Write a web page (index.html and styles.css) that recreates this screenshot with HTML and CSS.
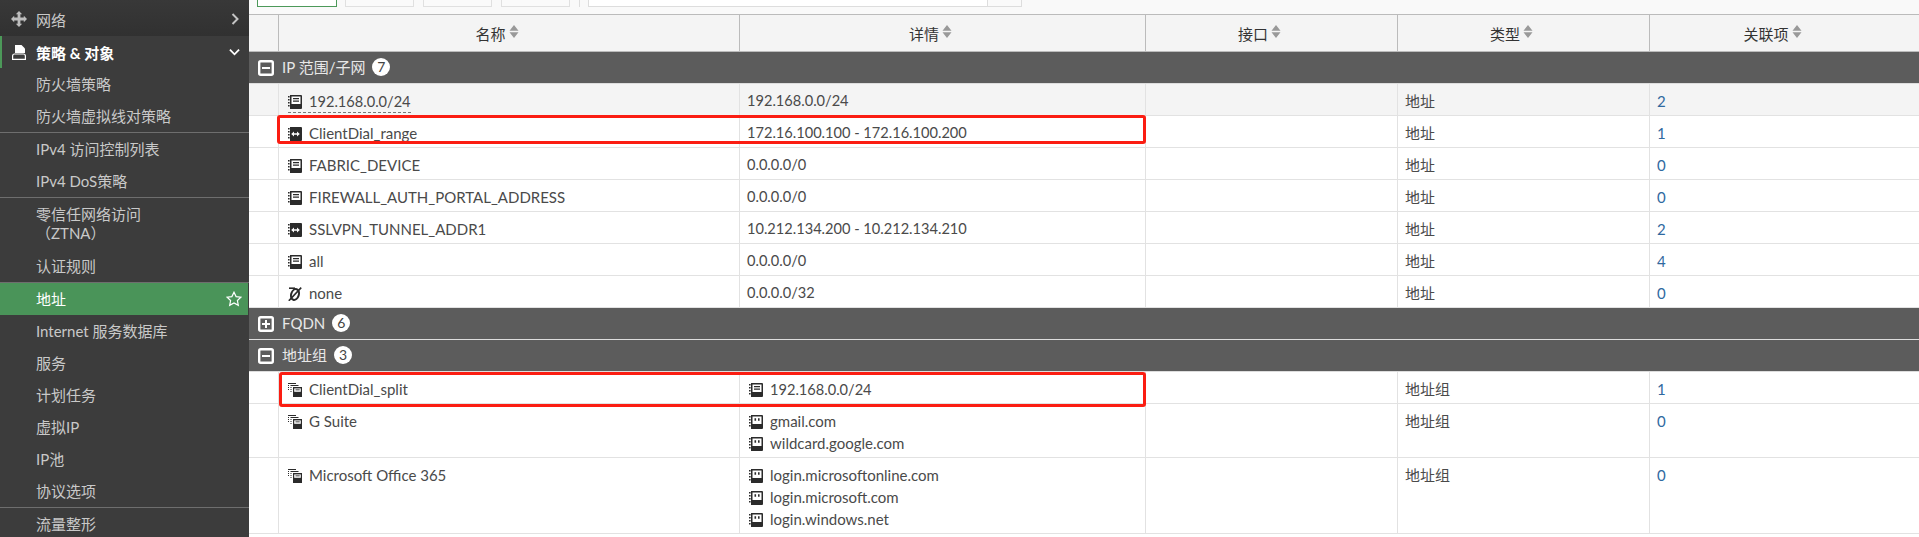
FILE: index.html
```html
<!DOCTYPE html>
<html lang="zh-CN">
<head>
<meta charset="utf-8">
<title>地址</title>
<link rel="stylesheet" href="styles.css">
</head>
<body>
<svg class="defs" width="0" height="0" aria-hidden="true">
  <symbol id="i-subnet" viewBox="0 0 14 14">
    <path fill="#2b2b2b" d="M2 0h11a1 1 0 0 1 1 1v12a1 1 0 0 1-1 1H2z"/>
    <path fill="#fff" d="M3.500 1.500h9v7.500h-9z"/>
    <path fill="#2b2b2b" d="M0 1h1.600v1.400H0zM0 4h1.600v1.400H0zM0 7h1.600v1.400H0zM0 10h1.600v1.400H0zM5 3h6v1.200H5zM5 5.600h6v1.200H5z"/>
  </symbol>
  <symbol id="i-range" viewBox="0 0 14 14">
    <path fill="#2b2b2b" d="M2 0h11a1 1 0 0 1 1 1v12a1 1 0 0 1-1 1H2z"/>
    <path fill="#2b2b2b" d="M0 1h1.600v1.400H0zM0 4h1.600v1.400H0zM0 7h1.600v1.400H0zM0 10h1.600v1.400H0z"/>
    <path fill="#fff" d="M3.200 7 6 4.600v1.600h3V4.600L11.800 7 9 9.400V7.800H6v1.600z"/>
  </symbol>
  <symbol id="i-fqdn" viewBox="0 0 14 14">
    <path fill="#2b2b2b" d="M2 0h11a1 1 0 0 1 1 1v12a1 1 0 0 1-1 1H2z"/>
    <path fill="#2b2b2b" d="M0 1h1.600v1.400H0zM0 4h1.600v1.400H0zM0 7h1.600v1.400H0zM0 10h1.600v1.400H0z"/>
    <path fill="#fff" d="M3.500 1.500h9v7.500h-9z"/>
    <path fill="#2b2b2b" d="M5.500 3.200h1.600v2.600H5.500zM9 3.200h1.600v2.600H9z"/>
  </symbol>
  <symbol id="i-group" viewBox="0 0 14 14">
    <path fill="#2b2b2b" d="M0 0h8v1H0zM0 2h1v1H0zM0 4h1v1H0zM0 6h1v1H0zM2.500 2h8v1h-8zM2.500 4h1v1h-1zM2.500 6h1v1h-1zM2.500 8h1v1h-1z"/>
    <path fill="#2b2b2b" d="M5 4h9v10H5z"/>
    <path fill="#fff" d="M6.200 5.400h6.600v3.400H6.200z"/>
    <path fill="#2b2b2b" d="M7.500 6.400h4.200v.9H7.500z"/>
  </symbol>
  <symbol id="i-none" viewBox="0 0 14 14">
    <ellipse cx="7" cy="7.500" rx="3.800" ry="5.500" transform="rotate(18 7 7.500)" fill="none" stroke="#2b2b2b" stroke-width="2"/>
    <path fill="none" stroke="#2b2b2b" stroke-width="1.600" d="M.8 13.800 13.200.6"/>
    <path fill="none" stroke="#2b2b2b" stroke-width="1.600" d="M1 1.200h6"/>
  </symbol>
  <symbol id="i-sort" viewBox="0 0 10 13">
    <path fill="#999" d="M5 0l4.500 5.700H.5zM.5 7.300h9L5 13z"/>
  </symbol>
  <symbol id="i-minus" viewBox="0 0 16 16">
    <rect x="1.200" y="1.200" width="13.600" height="13.600" rx="1.500" fill="none" stroke="#fff" stroke-width="2.400"/>
    <path fill="#fff" d="M4 7h8v2H4z"/>
  </symbol>
  <symbol id="i-plus" viewBox="0 0 16 16">
    <rect x="1.200" y="1.200" width="13.600" height="13.600" rx="1.500" fill="none" stroke="#fff" stroke-width="2.400"/>
    <path fill="#fff" d="M4 7h3V4h2v3h3v2H9v3H7V9H4z"/>
  </symbol>
</svg>

<div class="app">
  <nav class="sidebar">
    <div class="nav-top">
      <svg class="nav-move" viewBox="0 0 16 16"><path fill="#bdbdbd" d="M8 0l3.200 3.200H9.400v3.400h3.400V4.800L16 8l-3.200 3.200V9.400H9.400v3.400h1.800L8 16l-3.200-3.200h1.800V9.400H3.200v1.800L0 8l3.200-3.200v1.800h3.400V3.200H4.800z"/></svg>
      <span class="nav-label">网络</span>
      <svg class="nav-chev" viewBox="0 0 8 12"><path fill="none" stroke="#c4c4c4" stroke-width="2" d="M1.500 1l5 5-5 5"/></svg>
    </div>
    <div class="nav-section">
      <svg class="nav-doc" viewBox="0 0 14 15"><path fill="#fff" d="M3 0h6.500L13 3.500V8H3z"/><path fill="none" stroke="#fff" stroke-width="1.200" d="M.6 14.400V11c0-1.200.8-2 2-2h8.800c1.200 0 2 .8 2 2v3.400z"/></svg>
      <span class="nav-label">策略 &amp; 对象</span>
      <svg class="nav-chev-down" viewBox="0 0 12 8"><path fill="none" stroke="#fff" stroke-width="2" d="M1 1.500l5 5 5-5"/></svg>
    </div>
    <div class="nav-item">防火墙策略</div>
    <div class="nav-item nav-sep">防火墙虚拟线对策略</div>
    <div class="nav-item">IPv4 访问控制列表</div>
    <div class="nav-item nav-sep">IPv4 DoS策略</div>
    <div class="nav-item nav-two">零信任网络访问<br>（ZTNA）</div>
    <div class="nav-item nav-sep">认证规则</div>
    <div class="nav-item nav-active">地址
      <svg class="nav-star" viewBox="0 0 16 16"><path fill="none" stroke="#fff" stroke-width="1.200" d="M8 1.200l2.100 4.400 4.800.6-3.500 3.300.9 4.800L8 12l-4.300 2.300.9-4.800L1.100 6.200l4.800-.6z"/></svg>
    </div>
    <div class="nav-item">Internet 服务数据库</div>
    <div class="nav-item">服务</div>
    <div class="nav-item">计划任务</div>
    <div class="nav-item">虚拟IP</div>
    <div class="nav-item">IP池</div>
    <div class="nav-item nav-sep">协议选项</div>
    <div class="nav-item">流量整形</div>
  </nav>

  <main class="main">
    <div class="toolbar">
      <span class="tb-btn tb-primary"></span>
      <span class="tb-btn"></span>
      <span class="tb-btn"></span>
      <span class="tb-btn"></span>
      <span class="tb-sep"></span>
      <span class="tb-search"></span>
      <span class="tb-go"></span>
    </div>
    <table class="grid">
      <colgroup>
        <col class="c-check"><col class="c-name"><col class="c-detail"><col class="c-iface"><col class="c-type"><col class="c-ref">
      </colgroup>
      <thead>
        <tr>
          <th></th>
          <th>名称<svg class="sort"><use href="#i-sort"/></svg></th>
          <th>详情<svg class="sort"><use href="#i-sort"/></svg></th>
          <th>接口<svg class="sort"><use href="#i-sort"/></svg></th>
          <th>类型<svg class="sort"><use href="#i-sort"/></svg></th>
          <th>关联项<svg class="sort"><use href="#i-sort"/></svg></th>
        </tr>
      </thead>
      <tbody>
        <tr class="group"><td colspan="6"><svg class="toggle"><use href="#i-minus"/></svg>IP 范围/子网<span class="badge">7</span></td></tr>
        <tr class="hover">
          <td></td>
          <td><span class="tip"><svg class="ic"><use href="#i-subnet"/></svg><span class="ip">192.168.0.0/24</span></span></td>
          <td class="ip">192.168.0.0/24</td><td></td><td>地址</td><td class="ref">2</td>
        </tr>
        <tr>
          <td></td>
          <td><svg class="ic"><use href="#i-range"/></svg>ClientDial_range</td>
          <td class="ip">172.16.100.100 - 172.16.100.200</td><td></td><td>地址</td><td class="ref">1</td>
        </tr>
        <tr>
          <td></td>
          <td><svg class="ic"><use href="#i-subnet"/></svg>FABRIC_DEVICE</td>
          <td class="ip">0.0.0.0/0</td><td></td><td>地址</td><td class="ref">0</td>
        </tr>
        <tr>
          <td></td>
          <td><svg class="ic"><use href="#i-subnet"/></svg>FIREWALL_AUTH_PORTAL_ADDRESS</td>
          <td class="ip">0.0.0.0/0</td><td></td><td>地址</td><td class="ref">0</td>
        </tr>
        <tr>
          <td></td>
          <td><svg class="ic"><use href="#i-range"/></svg>SSLVPN_TUNNEL_ADDR1</td>
          <td class="ip">10.212.134.200 - 10.212.134.210</td><td></td><td>地址</td><td class="ref">2</td>
        </tr>
        <tr>
          <td></td>
          <td><svg class="ic"><use href="#i-subnet"/></svg>all</td>
          <td class="ip">0.0.0.0/0</td><td></td><td>地址</td><td class="ref">4</td>
        </tr>
        <tr>
          <td></td>
          <td><svg class="ic"><use href="#i-none"/></svg>none</td>
          <td class="ip">0.0.0.0/32</td><td></td><td>地址</td><td class="ref">0</td>
        </tr>
        <tr class="group"><td colspan="6"><svg class="toggle"><use href="#i-plus"/></svg>FQDN<span class="badge">6</span></td></tr>
        <tr class="group"><td colspan="6"><svg class="toggle"><use href="#i-minus"/></svg>地址组<span class="badge">3</span></td></tr>
        <tr>
          <td></td>
          <td><svg class="ic"><use href="#i-group"/></svg>ClientDial_split</td>
          <td><div class="member"><svg class="ic"><use href="#i-subnet"/></svg><span class="ip">192.168.0.0/24</span></div></td><td></td><td>地址组</td><td class="ref">1</td>
        </tr>
        <tr>
          <td></td>
          <td><svg class="ic"><use href="#i-group"/></svg>G Suite</td>
          <td class="multi">
            <div class="member"><svg class="ic"><use href="#i-fqdn"/></svg>gmail.com</div>
            <div class="member"><svg class="ic"><use href="#i-fqdn"/></svg>wildcard.google.com</div>
          </td><td></td><td>地址组</td><td class="ref">0</td>
        </tr>
        <tr>
          <td></td>
          <td><svg class="ic"><use href="#i-group"/></svg>Microsoft Office 365</td>
          <td class="multi">
            <div class="member"><svg class="ic"><use href="#i-fqdn"/></svg>login.microsoftonline.com</div>
            <div class="member"><svg class="ic"><use href="#i-fqdn"/></svg>login.microsoft.com</div>
            <div class="member"><svg class="ic"><use href="#i-fqdn"/></svg>login.windows.net</div>
          </td><td></td><td>地址组</td><td class="ref">0</td>
        </tr>
      </tbody>
    </table>
    <div class="mark mark-range"></div>
    <div class="mark mark-split"></div>
  </main>
</div>
</body>
</html>
```

FILE: styles.css
```css
* { box-sizing: border-box; }

html, body {
  margin: 0;
  height: 537px;
  overflow: hidden;
  background: #fff;
}

body {
  font-family: Lato, "Noto Sans CJK SC", sans-serif;
  font-size: 15px;
  color: #4a4a4a;
}

.defs { position: absolute; }

.app {
  display: flex;
  height: 537px;
}

/* Sidebar */
.sidebar {
  width: 249px;
  flex: none;
  background: #3c3c3c;
  color: #c9c9c9;
  font-size: 15px;
}

.nav-top {
  height: 36px;
  display: flex;
  align-items: center;
  padding: 2px 10px 0 11px;
  background: linear-gradient(#383838, #313131);
}

.nav-move { width: 16px; height: 16px; margin-right: 9px; }
.nav-chev { width: 8px; height: 12px; margin-left: auto; }

.nav-section {
  height: 32px;
  display: flex;
  align-items: center;
  padding: 0 9px 0 10px;
  border-left: 2px solid #4c9959;
  color: #fff;
  font-weight: 700;
}

.nav-doc { width: 14px; height: 15px; margin-right: 10px; }
.nav-chev-down { width: 11px; height: 8px; margin-left: auto; }

.nav-item {
  height: 32px;
  line-height: 32px;
  padding-left: 36px;
  white-space: nowrap;
}

.nav-sep {
  height: 33px;
  border-bottom: 1px solid #6e6e6e;
}

.nav-two {
  height: 52px;
  line-height: 19px;
  padding-top: 7px;
}

.nav-active {
  display: flex;
  align-items: center;
  justify-content: space-between;
  width: 248px;
  padding-right: 6px;
  background: #4a9459;
  color: #fff;
}

.nav-star { width: 16px; height: 16px; }

/* Main */
.main {
  position: relative;
  flex: 1;
  min-width: 0;
}

.toolbar {
  height: 15px;
  display: flex;
  align-items: flex-start;
  padding-left: 8px;
  background: #f9f9f9;
  border-bottom: 1px solid #bbb;
}

.tb-btn {
  width: 69px;
  height: 7px;
  margin-right: 9px;
  background: #fafafa;
  border: 1px solid #e0e0e0;
  border-top: 0;
}

.tb-primary {
  width: 80px;
  margin-right: 8px;
  background: #fff;
  border-color: #4c9959;
}

.tb-sep {
  width: 1px;
  height: 7px;
  margin-right: 8px;
  background: #ddd;
}

.tb-search {
  width: 400px;
  height: 7px;
  background: #fff;
  border: 1px solid #ddd;
  border-top: 0;
}

.tb-go {
  width: 34px;
  height: 7px;
  background: #fafafa;
  border: 1px solid #ddd;
  border-top: 0;
  border-left: 0;
}

.grid {
  width: 1670px;
  table-layout: fixed;
  border-collapse: separate;
  border-spacing: 0;
}

.c-check { width: 30px; }
.c-name { width: 461px; }
.c-detail { width: 406px; }
.c-iface { width: 252px; }
.c-type { width: 252px; }
.c-ref { width: 269px; }

.grid th {
  height: 37px;
  padding: 0 24px 0 0;
  background: #f4f4f4;
  border-right: 1px solid #bbb;
  border-bottom: 1px solid #bbb;
  font-weight: 400;
  color: #333;
  text-align: center;
}

.grid th:last-child { border-right: 0; }

.sort {
  width: 10px;
  height: 13px;
  margin-left: 3px;
  vertical-align: 2px;
}

.grid td {
  height: 32px;
  padding: 6px 7px 0;
  line-height: 22px;
  vertical-align: top;
  white-space: nowrap;
  border-right: 1px solid #e2e2e2;
  border-bottom: 1px solid #e2e2e2;
}

.grid td:last-child { border-right: 0; }

.grid td:nth-child(2) { padding-left: 9px; }

.grid td.multi { padding-bottom: 3px; }

.grid tr.hover td { background: #f4f4f4; }

.ip { font-size: 14.6px; }

.member {
  height: 22px;
  padding-left: 2px;
}

.ref { color: #30699f; }

.ic {
  width: 14px;
  height: 14px;
  margin-right: 7px;
  vertical-align: -2px;
}

.tip {
  display: inline-block;
  line-height: 20px;
  border-bottom: 1px dashed #777;
}

.grid tr.group td {
  height: 32px;
  padding: 0 0 0 9px;
  line-height: 31px;
  background: #5c5c5c;
  color: #e8e8e8;
  font-size: 15px;
  border-right: 0;
  border-bottom: 1px solid #ddd;
}

.toggle {
  width: 16px;
  height: 16px;
  margin-right: 8px;
  vertical-align: -3px;
}

.badge {
  display: inline-block;
  width: 18px;
  height: 18px;
  margin-left: 7px;
  border-radius: 50%;
  background: #fff;
  color: #444;
  font-size: 14px;
  line-height: 18px;
  text-align: center;
  vertical-align: 1px;
}

.mark {
  position: absolute;
  border: 3px solid #fb1d12;
  border-radius: 3px;
}

.mark-range {
  left: 28px;
  top: 115px;
  width: 869px;
  height: 29px;
}

.mark-split {
  left: 30px;
  top: 372px;
  width: 867px;
  height: 35px;
}
```
